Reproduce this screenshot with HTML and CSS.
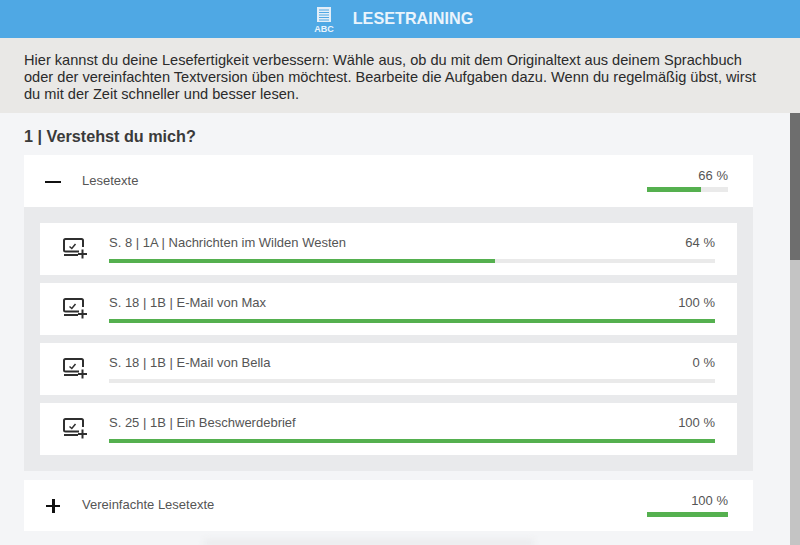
FILE: index.html
```html
<!DOCTYPE html>
<html lang="de">
<head>
    <meta charset="UTF-8">
    <meta name="viewport" content="width=device-width, initial-scale=1.0">
    <title>Lesetraining</title>
    <link rel="stylesheet" href="styles.css">
</head>
<body>
    <div class="page">
        <header class="top-bar">
            <svg class="book-icon" width="20" height="27" viewBox="0 0 20 27">
                <path d="M3 0h14v15H3z" fill="#e3eef8"/>
                <path d="M5 3h10M5 5.500h10M5 8h10M5 10.500h10M5 13h10" stroke="#4fa8e4" stroke-width="1"/>
                <text x="10" y="24.500" class="book-label">ABC</text>
            </svg>
            <h1>LESETRAINING</h1>
        </header>

        <section class="intro">
            <p>Hier kannst du deine Lesefertigkeit verbessern: Wähle aus, ob du mit dem Originaltext aus deinem Sprachbuch oder der vereinfachten Textversion üben möchtest. Bearbeite die Aufgaben dazu. Wenn du regelmäßig übst, wirst du mit der Zeit schneller und besser lesen.</p>
        </section>

        <main class="content">
            <h2>1 | Verstehst du mich?</h2>

            <div class="group-head">
                <span class="toggle minus"></span>
                <span class="group-title">Lesetexte</span>
                <div class="group-progress">
                    <span class="percent">66 %</span>
                    <div class="bar"><div class="bar-fill" style="width: 66.7%"></div></div>
                </div>
            </div>

            <div class="group-body">
                <div class="lesson">
                    <svg class="lesson-icon" width="26" height="22" viewBox="0 0 26 22"><use href="#screen-plus"/></svg>
                    <div class="lesson-main">
                        <div class="lesson-line"><span>S. 8 | 1A | Nachrichten im Wilden Westen</span><span>64 %</span></div>
                        <div class="bar"><div class="bar-fill" style="width: 63.7%"></div></div>
                    </div>
                </div>
                <div class="lesson">
                    <svg class="lesson-icon" width="26" height="22" viewBox="0 0 26 22"><use href="#screen-plus"/></svg>
                    <div class="lesson-main">
                        <div class="lesson-line"><span>S. 18 | 1B | E-Mail von Max</span><span>100 %</span></div>
                        <div class="bar"><div class="bar-fill" style="width: 100%"></div></div>
                    </div>
                </div>
                <div class="lesson">
                    <svg class="lesson-icon" width="26" height="22" viewBox="0 0 26 22"><use href="#screen-plus"/></svg>
                    <div class="lesson-main">
                        <div class="lesson-line"><span>S. 18 | 1B | E-Mail von Bella</span><span>0 %</span></div>
                        <div class="bar"><div class="bar-fill" style="width: 0%"></div></div>
                    </div>
                </div>
                <div class="lesson">
                    <svg class="lesson-icon" width="26" height="22" viewBox="0 0 26 22"><use href="#screen-plus"/></svg>
                    <div class="lesson-main">
                        <div class="lesson-line"><span>S. 25 | 1B | Ein Beschwerdebrief</span><span>100 %</span></div>
                        <div class="bar"><div class="bar-fill" style="width: 100%"></div></div>
                    </div>
                </div>
            </div>

            <div class="group-head closed">
                <span class="toggle plus"></span>
                <span class="group-title">Vereinfachte Lesetexte</span>
                <div class="group-progress">
                    <span class="percent">100 %</span>
                    <div class="bar"><div class="bar-fill" style="width: 100%"></div></div>
                </div>
            </div>
            <div class="next-shadow"></div>
        </main>

        <div class="scrollbar"><div class="scroll-thumb"></div></div>
    </div>

    <svg width="0" height="0" class="defs">
        <symbol id="screen-plus" viewBox="0 0 26 22">
            <path d="M17 14.500H3.500A1.500 1.500 0 0 1 2 13V3.500A1.500 1.500 0 0 1 3.500 2h16A1.500 1.500 0 0 1 21 3.500V10" fill="none" stroke="#2f2f2f" stroke-width="2"/>
            <path d="M7.500 9.500l2.300 2 3.700-4.500" fill="none" stroke="#2f2f2f" stroke-width="1.500"/>
            <path d="M2 18h14" fill="none" stroke="#2f2f2f" stroke-width="2"/>
            <path d="M20.500 12.500v9M16 17h9" fill="none" stroke="#2f2f2f" stroke-width="2"/>
        </symbol>
    </svg>
</body>
</html>
```

FILE: styles.css
```css
html, body {
    margin: 0;
    height: 100%;
    overflow: hidden;
}
body {
    font-family: "Liberation Sans", Arial, sans-serif;
    color: #555;
    background-color: #f4f5f7;
}
.page {
    position: relative;
    height: 545px;
    overflow: hidden;
}
.defs {
    position: absolute;
}

/* Kopfzeile */
.top-bar {
    height: 38px;
    background-color: #4fa8e4;
    display: flex;
    justify-content: center;
    align-items: center;
    gap: 19px;
    padding-right: 13px;
    box-sizing: border-box;
}
.top-bar h1 {
    margin: 0 0 2px;
    font-size: 16.2px;
    font-weight: bold;
    color: #eaf4fc;
}
.book-icon {
    display: block;
    margin-top: 2px;
}
.book-label {
    font-size: 9px;
    font-weight: bold;
    fill: #eaf4fc;
    text-anchor: middle;
}

/* Einleitung */
.intro {
    height: 75px;
    box-sizing: border-box;
    padding: 14px 30px 0 24px;
    background-color: #e9e8e6;
}
.intro p {
    margin: 0;
    font-size: 14.6px;
    line-height: 17px;
    color: #2b2b2b;
}

.content {
    width: 729px;
    margin-left: 24px;
}
.content h2 {
    margin: 0;
    padding-top: 14px;
    height: 42px;
    box-sizing: border-box;
    font-size: 16.2px;
    line-height: 18px;
    color: #3a3a3a;
}

.group-head {
    height: 52px;
    background-color: #fff;
    display: flex;
    align-items: center;
    font-size: 13px;
}
.group-head.closed {
    margin-top: 9px;
    height: 51px;
}
.group-title {
    margin-left: 21px;
    margin-top: -2px;
}
.group-progress {
    margin-left: auto;
    margin-right: 25px;
    width: 81px;
    margin-top: -2px;
}
.percent {
    display: block;
    text-align: right;
    font-size: 13px;
    line-height: 16px;
    margin-bottom: 3px;
}

.toggle {
    position: relative;
    width: 16px;
    height: 16px;
    margin-left: 21px;
    flex: none;
}
.toggle::before,
.plus::after {
    content: "";
    position: absolute;
    background-color: #111;
}
.minus {
    top: 1px;
}
.minus::before {
    left: 0;
    top: 7px;
    width: 16px;
    height: 2px;
}
.plus::before {
    left: 1px;
    top: 7px;
    width: 14px;
    height: 2.5px;
}
.plus::after {
    left: 6.5px;
    top: 1px;
    width: 3px;
    height: 14px;
}

/* Fortschrittsbalken */
.bar {
    height: 4px;
    background-color: #eaeaea;
}
.group-progress .bar {
    height: 5px;
}
.bar-fill {
    height: 100%;
    background-color: #55b04f;
}

.group-body {
    background-color: #e9eaec;
    padding: 16px;
    display: flex;
    flex-direction: column;
    gap: 8px;
}
.lesson {
    height: 52px;
    background-color: #fff;
    display: flex;
    align-items: center;
    padding-right: 22px;
}
.lesson-icon {
    flex: none;
    margin-left: 22px;
    margin-right: 21px;
    margin-bottom: 3px;
}
.lesson-main {
    flex: 1;
    margin-top: 1px;
}
.lesson-line {
    display: flex;
    justify-content: space-between;
    font-size: 13px;
    line-height: 16px;
    margin-bottom: 7px;
    position: relative;
    top: -1px;
}

.next-shadow {
    width: 330px;
    height: 6px;
    margin: 9px 0 0 180px;
    background-color: #e9eaec;
    filter: blur(3px);
}

.scrollbar {
    position: absolute;
    top: 113px;
    right: 0;
    bottom: 0;
    width: 10px;
    background-color: #c4c4c4;
}
.scroll-thumb {
    height: 147px;
    background-color: #6e6e6e;
}
```
